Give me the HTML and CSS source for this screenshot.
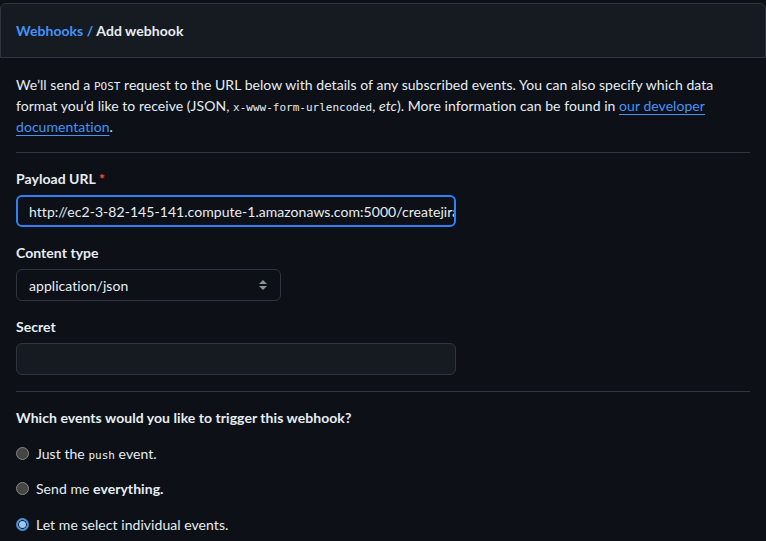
FILE: index.html
```html
<!DOCTYPE html>
<html>
<head>
<meta charset="utf-8">
<link rel="stylesheet" href="styles.css">
</head>
<body>
<div class="header">
  <h2 class="crumb"><a class="crumb-link" href="#">Webhooks</a><span class="sep"> / </span>Add webhook</h2>
</div>
<div class="content">
  <p class="intro">We’ll send a <code class="code">POST</code> request to the URL below with details of any subscribed events. You can also specify which data format you’d like to receive (JSON, <code class="code">x-www-form-urlencoded</code>, <em>etc</em>). More information can be found in <a class="link" href="#">our developer documentation</a>.</p>
  <div class="divider"></div>
  <div class="field">
    <label class="label">Payload URL <span class="req">*</span></label>
    <div class="input focus">http://ec2-3-82-145-141.compute-1.amazonaws.com:5000/createjira</div>
  </div>
  <div class="field">
    <label class="label">Content type</label>
    <div class="select">application/json
      <svg class="chev" width="10" height="14" viewBox="0 0 10 14"><path d="M5 2 L9 6 H1 Z M5 12 L9 8 H1 Z" fill="#8b949e"/></svg>
    </div>
  </div>
  <div class="field">
    <label class="label">Secret</label>
    <div class="input secret"></div>
  </div>
  <div class="divider d2"></div>
  <h3 class="question">Which events would you like to trigger this webhook?</h3>
  <div class="radio-row"><span class="radio"></span><span>Just the <code class="code small">push</code> event.</span></div>
  <div class="radio-row"><span class="radio"></span><span>Send me <strong>everything.</strong></span></div>
  <div class="radio-row"><span class="radio checked"></span><span>Let me select individual events.</span></div>
</div>
</body>
</html>
```
FILE: styles.css
```css
html, body {
  margin: 0;
  padding: 0;
  background: #0d1117;
  color: #e6edf3;
  font-family: "Lato", "Liberation Sans", sans-serif;
  font-size: 14px;
  letter-spacing: 0.05px;
  overflow: hidden;
}
body {
  width: 766px;
  height: 541px;
  padding-top: 3px;
  box-sizing: border-box;
}
.header {
  box-sizing: border-box;
  width: 766px;
  height: 55px;
  background: #161b22;
  border: 1px solid #30363d;
  border-radius: 6px 6px 0 0;
  display: flex;
  align-items: center;
  padding: 0 0 0 15px;
}
.crumb {
  margin: 0;
  font-size: 14px;
  font-weight: 700;
  color: #e6edf3;
}
.crumb-link { color: #4493f8; text-decoration: none; }
.sep { color: #4493f8; }
.content {
  padding: 16px 16px 0 16px;
}
.intro {
  margin: 0;
  line-height: 21px;
  width: 734px;
}
.code {
  font-family: "DejaVu Sans Mono", "Liberation Mono", monospace;
  font-size: 11px;
  letter-spacing: 0;
  line-height: 1;
}
.small { font-size: 11px; }
.link {
  color: #4493f8;
  text-decoration: underline;
  text-underline-offset: 3px;
}
.divider {
  height: 1px;
  background: #30363d;
  margin: 15px 0 16px;
}
.d2 { margin: 14px 0 16px; }
.field { margin-bottom: 16px; }
.label {
  display: block;
  font-weight: 700;
  margin-bottom: 6px;
  line-height: 20px;
}
.req { color: #f85149; }
.input {
  box-sizing: border-box;
  width: 440px;
  height: 32px;
  border: 1px solid #30363d;
  border-radius: 6px;
  padding: 0 12px;
  display: flex;
  align-items: center;
  white-space: nowrap;
  overflow: hidden;
  color: #e6edf3;
}
.focus {
  border: 2px solid #2f81f7;
  padding: 0 11px;
}
.secret { background: #161b22; }
.select {
  box-sizing: border-box;
  width: 265px;
  height: 32px;
  border: 1px solid #30363d;
  border-radius: 6px;
  padding: 0 12px;
  display: flex;
  align-items: center;
  justify-content: space-between;
}
.question {
  margin: 0 0 15px;
  font-size: 14px;
  font-weight: 700;
  line-height: 20px;
}
.radio-row {
  display: flex;
  align-items: center;
  gap: 7px;
  height: 20px;
  margin-bottom: 15.5px;
}
.radio {
  box-sizing: border-box;
  width: 13px;
  height: 13px;
  border-radius: 50%;
  background: #454545;
  border: 1px solid #858585;
}
.radio.checked {
  background: #99c8ff;
  border: 2px solid #4c8fd9;
  box-shadow: inset 0 0 0 1px #0d1117;
}
```
